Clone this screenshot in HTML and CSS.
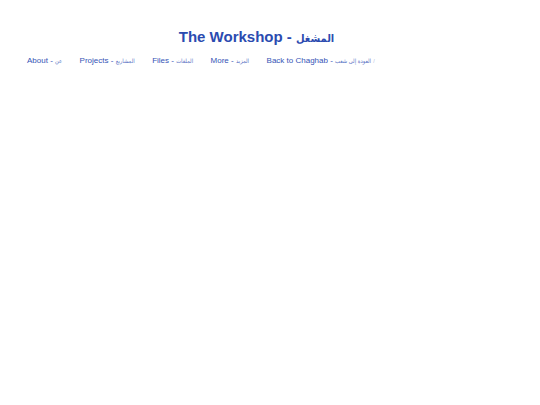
FILE: index.html
```html
<!DOCTYPE html>
<html lang="en">
<head>
<meta charset="utf-8">
<title>The Workshop</title>
<link rel="stylesheet" href="styles.css">
</head>
<body>
<header class="site-header">
  <h1 class="site-title">The Workshop - <span class="ar">المشغل</span></h1>
  <nav class="site-nav">
    <a class="nav-link" href="#">About - <span class="ar">عن</span></a>
    <a class="nav-link" href="#">Projects - <span class="ar">المشاريع</span></a>
    <a class="nav-link" href="#">Files - <span class="ar">الملفات</span></a>
    <a class="nav-link" href="#">More - <span class="ar">المزيد</span></a>
    <a class="nav-link" href="#">Back to Chaghab - <span class="ar">العودة إلى شغب</span> <span class="ext">/</span></a>
  </nav>
</header>
</body>
</html>
```

FILE: styles.css
```css
html, body {
  background: #ffffff;
}
body {
  margin: 8px;
  font-family: "Liberation Sans", Arial, "DejaVu Sans", sans-serif;
  color: #2b4bb0;
}
.site-header {
  display: flex;
  flex-direction: column;
}
.site-title {
  margin: 20px 0 0 0;
  padding-right: 27px;
  text-align: center;
  font-size: 15px;
  font-weight: bold;
  color: #2b4bb0;
  line-height: 18px;
}
.site-title .ar {
  font-family: "DejaVu Sans Condensed", "DejaVu Sans", sans-serif;
  font-size: 11px;
}
.site-nav {
  display: flex;
  gap: 17.5px;
  padding-left: 19px;
  margin-top: 8px;
}
.nav-link {
  font-size: 8px;
  line-height: 10px;
  color: #3553b6;
  text-decoration: none;
  white-space: nowrap;
}
.nav-link .ar {
  font-family: "DejaVu Sans Condensed", "DejaVu Sans", sans-serif;
  font-size: 5.8px;
  color: #5a73c4;
}
.ext {
  font-size: 5px;
  color: #a9b5de;
}
```
